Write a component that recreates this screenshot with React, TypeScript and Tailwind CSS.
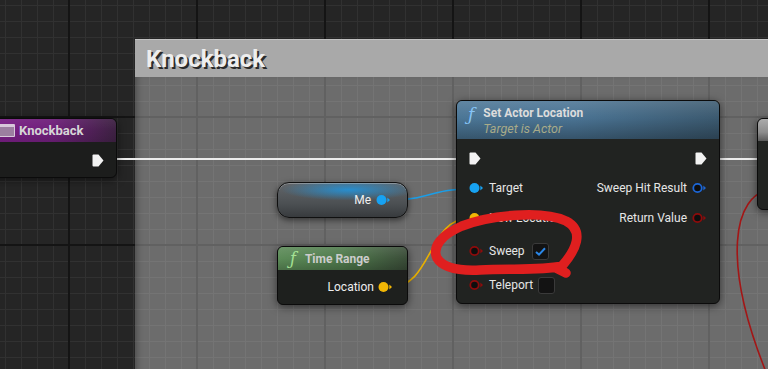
import React from "react";

function ExecPin() {
	return (
		<svg width="12" height="13" viewBox="0 0 12 13" className="shrink-0">
			<path d="M1.5 0.5H6.5L11.5 6.5L6.5 12.5H1.5Q0.5 12.5 0.5 11.5V1.5Q0.5 0.5 1.5 0.5Z" fill="#f2f2f2" />
		</svg>
	);
}

function DataPin({ color, hollow = false }: { color: string; hollow?: boolean }) {
	return (
		<svg width="15" height="12" viewBox="0 0 15 12" className="shrink-0">
			<circle
				cx="5.5"
				cy="6"
				r={hollow ? 4.2 : 5}
				fill={hollow ? "#0e0e0e" : color}
				stroke={hollow ? color : "none"}
				strokeWidth={hollow ? 1.8 : 0}
			/>
			<path d="M11.3 3.6L14 6L11.3 8.4Z" fill={color} />
		</svg>
	);
}

function Checkbox({ checked }: { checked?: boolean }) {
	return (
		<div className="w-[17px] h-[17px] rounded-[3px] bg-[#131313] border border-[#3a3a3a] flex items-center justify-center">
			{checked && (
				<svg width="11" height="9" viewBox="0 0 11 9">
					<path d="M1 5L4 7.6L10 1.2" fill="none" stroke="#2a86e6" strokeWidth="2" />
				</svg>
			)}
		</div>
	);
}

function SetActorLocation() {
	return (
		<div className="absolute left-[456px] top-[100px] w-[264px] h-[204px] rounded-[6px] border border-[#0b0b0b] bg-[#212321] shadow-[0_2px_8px_rgba(0,0,0,0.55)] overflow-hidden">
			<div className="h-[38px] flex pl-[11px] pt-[2px] gap-[9px] bg-[linear-gradient(to_bottom,rgba(255,255,255,0.12),transparent_45%,rgba(0,0,0,0.28)),linear-gradient(to_right,#4b7696,#4a7393_45%,#3b596f)]">
				<span className="text-[#86c4f6] italic font-['DejaVu_Serif',serif] text-[17px] leading-[22px]">ƒ</span>
				<div className="flex flex-col pt-[2px]">
					<span className="text-[12px] font-bold text-[#dcdcdc] leading-[16px]">Set Actor Location</span>
					<span className="text-[12.5px] italic text-[#a8ab89] leading-[16px]">Target is Actor</span>
				</div>
			</div>
			<div className="flex flex-col px-[12px] pt-[12px] text-[12px] text-[#e6e6e6]">
				<div className="h-[14px] flex items-center justify-between">
					<ExecPin />
					<ExecPin />
				</div>
				<div className="mt-[13px] h-[20px] flex items-center justify-between">
					<div className="flex items-center gap-[5px]">
						<DataPin color="#17a2f2" />
						<span>Target</span>
					</div>
					<div className="flex items-center gap-[5px]">
						<span>Sweep Hit Result</span>
						<DataPin color="#1c66d6" hollow />
					</div>
				</div>
				<div className="mt-[10px] h-[20px] flex items-center justify-between">
					<div className="flex items-center gap-[5px]">
						<DataPin color="#f2b705" />
						<span>New Location</span>
					</div>
					<div className="flex items-center gap-[5px]">
						<span>Return Value</span>
						<DataPin color="#8e0b0b" hollow />
					</div>
				</div>
				<div className="mt-[13px] h-[20px] flex items-center">
					<div className="flex items-center gap-[5px]">
						<DataPin color="#8e0b0b" hollow />
						<span>Sweep</span>
					</div>
					<div className="ml-[7px]">
						<Checkbox checked />
					</div>
				</div>
				<div className="mt-[14px] h-[20px] flex items-center">
					<div className="flex items-center gap-[5px]">
						<DataPin color="#8e0b0b" hollow />
						<span>Teleport</span>
					</div>
					<div className="ml-[5px]">
						<Checkbox />
					</div>
				</div>
			</div>
		</div>
	);
}

export default function App() {
	return (
		<div className="relative w-[768px] h-[369px] overflow-hidden bg-[#252525] font-['Roboto',sans-serif] bg-[linear-gradient(to_right,#141414_2px,transparent_2px),linear-gradient(to_bottom,#141414_2px,transparent_2px),linear-gradient(to_right,#313131_1px,transparent_1px),linear-gradient(to_bottom,#313131_1px,transparent_1px)] bg-[size:128px_128px,128px_128px,16px_16px,16px_16px] bg-[position:68px_116px,68px_116px,5px_5px,5px_5px]">
			{/* comment box */}
			<div className="absolute left-[135px] top-[39px] w-[700px] h-[400px] flex flex-col">
				<div className="h-[38px] bg-[#a9a9a9] border-t border-[#c2c2c2] pl-[11px] flex items-center">
					<span className="text-[24px] font-bold text-[#eeeeee] [text-shadow:2px_2px_0_#2b2b2b] leading-none">Knockback</span>
				</div>
				<div className="flex-1 bg-[rgba(255,255,255,0.33)] shadow-[inset_6px_0_6px_-4px_rgba(0,0,0,0.3)]" />
			</div>

			{/* wires */}
			<svg className="absolute left-0 top-0" width="768" height="369" viewBox="0 0 768 369">
				<line x1="100" y1="159" x2="470" y2="159" stroke="#ececec" strokeWidth="2.2" />
				<line x1="705" y1="159" x2="762" y2="159" stroke="#ececec" strokeWidth="2.2" />
				<path d="M390 200 C430 200 430 189 470 189" fill="none" stroke="#1a9ee8" strokeWidth="1.6" />
				<path d="M391 287 C432 287 428 218 470 218" fill="none" stroke="#e8b000" strokeWidth="1.6" />
				<path d="M772 189 C732 194 722 262 766 372" fill="none" stroke="#a31616" strokeWidth="1.6" />
			</svg>

			{/* event node */}
			<div className="absolute left-[-12px] top-[118px] w-[129px] h-[60px] rounded-[6px] border border-[#0b0b0b] bg-[#1c1d1c] shadow-[0_2px_8px_rgba(0,0,0,0.55)] overflow-hidden">
				<div className="h-[23px] flex items-center gap-[4px] pl-[10px] bg-[linear-gradient(to_bottom,rgba(255,255,255,0.06),transparent_50%,rgba(0,0,0,0.1)),linear-gradient(to_right,#7b1f87,#6e1f79_50%,#3d2142)]">
					<div className="w-[16px] h-[13px] bg-[#9c7fa0] border border-[#d8c8da] border-t-[3px] rounded-[1px]" />
					<span className="text-[13px] font-bold text-[#d6d6d6]">Knockback</span>
				</div>
				<div className="flex justify-end pr-[12px] pt-[12px]">
					<ExecPin />
				</div>
			</div>

			{/* self node */}
			<div className="absolute left-[277px] top-[182px] w-[131px] h-[36px] rounded-[12px] border border-[#101010] shadow-[0_2px_6px_rgba(0,0,0,0.55),inset_0_1px_0_rgba(255,255,255,0.28)] bg-[radial-gradient(ellipse_70%_42%_at_55%_20%,rgba(30,150,225,0.85),transparent_75%),linear-gradient(to_bottom,#62666a,#4c5053_60%,#383b3e)] flex items-center justify-end pr-[16px] gap-[5px]">
				<span className="text-[12px] text-[#f0f0f0]">Me</span>
				<DataPin color="#17a2f2" />
			</div>

			{/* time range node */}
			<div className="absolute left-[277px] top-[246px] w-[131px] h-[59px] rounded-[6px] border border-[#0b0b0b] bg-[#1e201e] shadow-[0_2px_8px_rgba(0,0,0,0.55)] overflow-hidden">
				<div className="h-[23px] flex items-center gap-[9px] pl-[12px] bg-[linear-gradient(to_bottom,rgba(255,255,255,0.1),transparent_50%,rgba(0,0,0,0.2)),linear-gradient(to_right,#5c8b58,#4f7a4c_50%,#3a4c38)]">
					<span className="text-[#a5e294] italic font-['DejaVu_Serif',serif] text-[16px] leading-none">ƒ</span>
					<span className="text-[12px] font-bold text-[#cccccc]">Time Range</span>
				</div>
				<div className="flex justify-end items-center gap-[4px] pr-[14px] pt-[8px]">
					<span className="text-[12px] text-[#eeeeee]">Location</span>
					<DataPin color="#f2b705" />
				</div>
			</div>

			<SetActorLocation />

			{/* partial node on the right */}
			<div className="absolute left-[757px] top-[118px] w-[60px] h-[92px] rounded-[6px] border border-[#0b0b0b] bg-[#222422] shadow-[0_2px_8px_rgba(0,0,0,0.55)] overflow-hidden">
				<div className="h-[22px] bg-[linear-gradient(to_bottom,#ababab,#8c8c8c_60%,#5a5a5a)]" />
			</div>

			{/* red marker */}
			<svg className="absolute left-0 top-0 pointer-events-none" width="768" height="369" viewBox="0 0 768 369">
				<path
					d="M462 226 C490 215 542 210 566 221 C585 231 576 250 562 266 C540 271 510 268 480 270 C460 271 443 268 437 258 C432 247 441 235 462 226 M556 268 L566 273"
					fill="none"
					stroke="#e01f1f"
					strokeWidth="9.5"
					strokeLinecap="round"
					strokeLinejoin="round"
				/>
			</svg>
		</div>
	);
}
